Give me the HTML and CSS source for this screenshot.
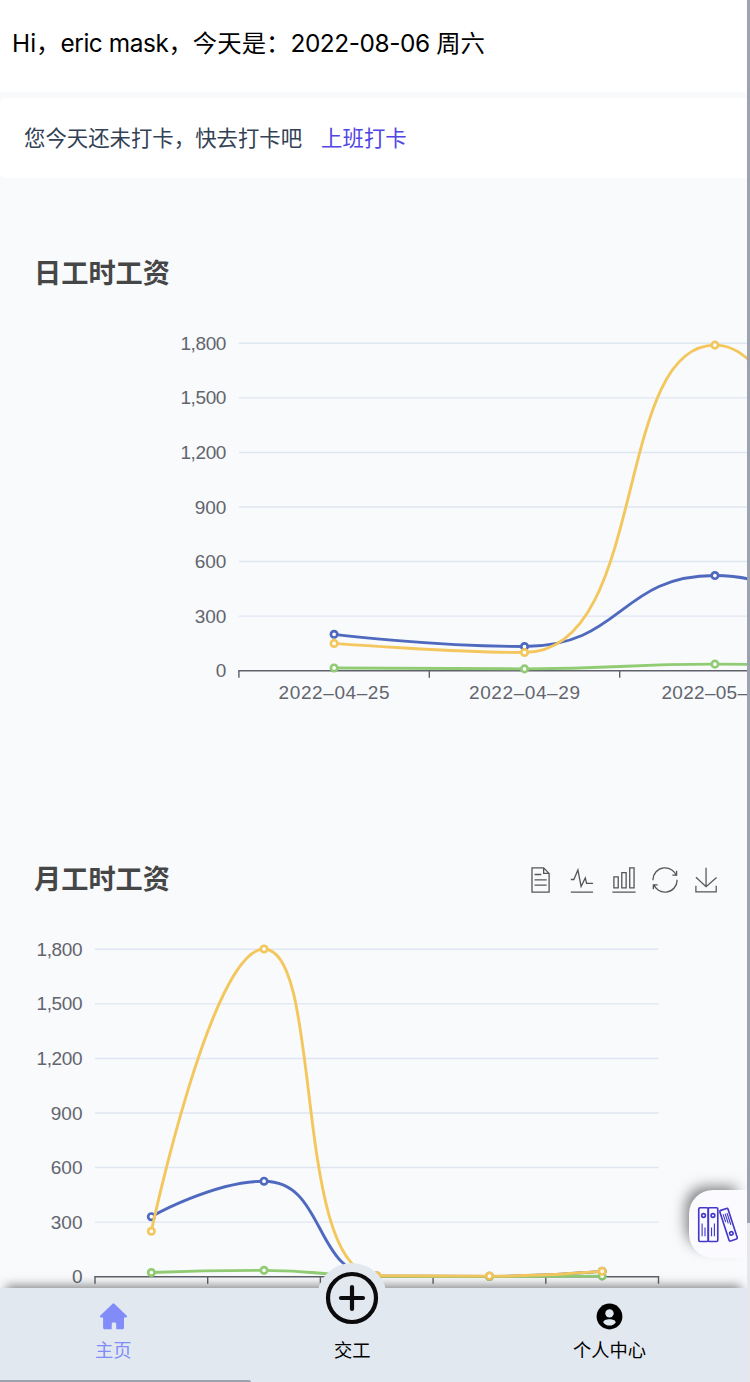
FILE: index.html
```html
<!DOCTYPE html>
<html lang="zh">
  <head>
    <meta charset="utf-8">
    <title>主页</title>
    <link rel="stylesheet" href="styles.css">
  </head>
  <body>
    <div class="page">
      <header class="greeting">Hi，<span class="latin">eric mask</span>，今天是：<span class="latin">2022-08-06 </span>周六</header>

      <div class="clock-card">
        <span>您今天还未打卡，快去打卡吧</span>
        <a class="clock-link">上班打卡</a>
      </div>

      <section class="chart">
        <div class="chart-head">
          <h2>日工时工资</h2>
        </div>
        <svg id="dayChart" class="plot"></svg>
      </section>

      <section class="chart">
        <div class="chart-head">
          <h2>月工时工资</h2>
          <div class="toolbox">
            <svg viewBox="0 0 60 60"><path d="M17.5,17.3H33M45.4,29.5h-28M11.5,2v56H51V14.8L38.4,2H11.5zM38.4,2.2v12.7H51M45.4,41.7h-28"/></svg>
            <svg viewBox="0 0 60 60"><path d="M4.1,28.9h7.1l9.3-22l7.4,38l9.7-19.7l3,12.8h14.9M4.1,58h51.4"/></svg>
            <svg viewBox="0 0 60 60"><path d="M6.7,22.9h10V48h-10V22.9zM24.9,13h10v35h-10V13zM43.2,2h10v46h-10V2zM3.1,58h53.7"/></svg>
            <svg viewBox="0 0 60 60"><path d="M47,18.9h9.8V8.7M56.3,20.1C52.1,9,40.5,0.6,26.8,2.1C12.6,3.7,1.6,16.2,2.1,30.6M13,41.1H3.1v10.2M3.7,39.9c4.2,11.1,15.8,19.5,29.5,18c14.2-1.6,25.2-14.1,24.7-28.5"/></svg>
            <svg viewBox="0 -2 63 63"><path d="M4.7,22.9L29.3,45.5L54.7,23.4M4.6,43.6L4.6,58L53.8,58L53.8,43.6M29.2,45.1L29.2,0"/></svg>
          </div>
        </div>
        <svg id="monthChart" class="plot"></svg>
      </section>
    </div>

    <div class="fab">
      <svg width="43" height="38.9" viewBox="0 0 42 38">
        <rect x="1.7" y="1.7" width="9.3" height="33" rx="1.2"/>
        <rect x="11" y="1.7" width="9.3" height="33" rx="1.2"/>
        <circle cx="6.4" cy="9.3" r="1.8"/>
        <circle cx="15.6" cy="9.3" r="1.8"/>
        <path class="thin" d="M5 17v12.5M7.8 21v8.5M14.2 21v8.5M17 17v12.5"/>
        <g transform="rotate(-18 30.8 18.2)">
          <rect x="26.6" y="2.6" width="8.4" height="31.4" rx="1.2"/>
          <circle cx="30.8" cy="27.2" r="1.7"/>
          <path class="thin" d="M28.900 7v8M30.900 7v10M32.900 7v12"/>
        </g>
      </svg>
    </div>

    <nav class="tabbar">
      <a class="tab active">
        <svg class="tab-icon" viewBox="0 0 27 27"><path d="M12.600.800a1.300 1.300 0 0 1 1.800 0L26.600 12.600c.7.8.3 1.900-.7 1.900H24v10.200c0 .9-.6 1.500-1.500 1.500h-6.300V21c0-1-.6-1.600-1.500-1.600h-1.500c-.9 0-1.500.6-1.500 1.600v5.200H4.600c-.9 0-1.500-.6-1.500-1.500V14.500H1.100c-1 0-1.400-1.100-.7-1.900z"/></svg>
        <span>主页</span>
      </a>
      <a class="tab">
        <span class="add">
          <svg width="54" height="54" viewBox="0 0 54 54">
            <circle cx="27" cy="27" r="24"/>
            <path d="M27 16v22M16 27h22"/>
          </svg>
        </span>
        <span class="tab-icon"></span>
        <span>交工</span>
      </a>
      <a class="tab">
        <svg class="tab-icon" viewBox="0 0 27 27">
          <circle cx="13.5" cy="13.5" r="12.900"/>
          <circle class="hole" cx="13.5" cy="10.400" r="4.200"/>
          <path class="hole" d="M7.300 19.400c0-2.200 2.800-3.200 6.200-3.200s6.200 1 6.200 3.200c-1.300 1.900-3.500 3.200-6.200 3.200s-4.900-1.300-6.200-3.200z"/>
        </svg>
        <span>个人中心</span>
      </a>
    </nav>

    <div class="scroll-y"></div>
    <div class="scroll-x"></div>

    <script src="charts.js"></script>
  </body>
</html>
```
FILE: styles.css
```css
* {
  margin: 0;
  padding: 0;
  box-sizing: border-box;
}

body {
  height: 1382px;
  overflow: hidden;
  background-color: #f8fafc;
  font-family: Inter, "Noto Sans CJK SC", sans-serif;
}

.page {
  display: flex;
  flex-direction: column;
  width: 750px;
}

.greeting {
  height: 92px;
  margin-bottom: 6px;
  padding-left: 12px;
  background-color: #fff;
  color: #000;
  font-size: 24.4px;
  line-height: 87px;
  white-space: nowrap;
}

.greeting .latin {
  letter-spacing: -0.42px;
}

.clock-card {
  display: flex;
  align-items: center;
  gap: 19px;
  height: 80px;
  padding: 0 0 4px 24px;
  border-radius: 5px;
  background-color: #fff;
  color: #334155;
  font-size: 21.4px;
}

.clock-link {
  color: #4f46e5;
}

/* Charts */
.chart {
  height: 606px;
}

.chart-head {
  display: flex;
  align-items: center;
  justify-content: space-between;
  height: 120px;
  padding: 72px 30px 0 34px;
}

.chart-head h2 {
  color: #464646;
  font-size: 27.2px;
  font-weight: 700;
  line-height: 48px;
}

.toolbox {
  display: flex;
  gap: 15.7px;
}

.toolbox svg {
  width: 26px;
  height: 26px;
  fill: none;
  stroke: #555;
  stroke-width: 3;
}

.plot {
  display: block;
  width: 750px;
  height: 486px;
  overflow: hidden;
}

.plot text {
  fill: #63656e;
  font-family: "Liberation Sans", sans-serif;
  font-size: 19px;
}

.plot .grid {
  stroke: #e0e6f1;
  stroke-width: 1.4;
}

.plot .axis {
  fill: none;
  stroke: #5f616a;
  stroke-width: 1.4;
}

.plot .line {
  fill: none;
  stroke-width: 2.9;
}

.plot .dot {
  fill: #fff;
  stroke-width: 2.7;
}

/* Floating button */
.fab {
  position: absolute;
  top: 1190px;
  right: 3px;
  display: flex;
  align-items: center;
  width: 58px;
  height: 68px;
  padding: 2px 0 0 8px;
  border-radius: 24px 0 0 24px;
  background-color: #fafaff;
  box-shadow: -7px -7px 14px -4px rgba(0, 0, 0, 0.5);
}

.fab svg {
  flex-shrink: 0;
  fill: none;
  stroke: #4338ca;
  stroke-width: 1.6;
}

.fab .thin {
  stroke-width: 1.1;
}

/* Bottom tabs */
.tabbar {
  position: absolute;
  left: 0;
  bottom: 0;
  display: flex;
  gap: 202.4px;
  width: 747px;
  height: 94px;
  padding: 15px 0 0 95px;
  background-color: #e2e8f0;
  box-shadow: 0 -8px 10px -6px rgba(0, 0, 0, 0.5);
}

.tab {
  position: relative;
  display: flex;
  flex-direction: column;
  align-items: center;
  color: #000;
  font-size: 18.3px;
  line-height: 26px;
}

.tab.active {
  color: #818cf8;
}

.tab-icon {
  width: 27px;
  height: 27px;
  margin-bottom: 7px;
  fill: currentColor;
}

.tab-icon .hole {
  fill: #e2e8f0;
}

.add {
  position: absolute;
  top: -40px;
  left: -17px;
  display: flex;
  align-items: center;
  justify-content: center;
  width: 70px;
  height: 70px;
  border-radius: 50%;
  background-color: #e2e8f0;
}

.add svg {
  fill: none;
  stroke: #0b0b0d;
  stroke-width: 4.2;
  stroke-linecap: round;
}

/* Scrollbars */
.scroll-y {
  position: absolute;
  top: 0;
  right: 0;
  width: 3px;
  height: 1382px;
  background: linear-gradient(#9ca3af, #9ca3af) 0 0 / 3px 1223px no-repeat #e5e7eb;
}

.scroll-x {
  position: absolute;
  left: 0;
  bottom: 0;
  width: 251px;
  height: 2px;
  border-radius: 0 2px 0 0;
  background-color: #9ca3af;
}
```
FILE: charts.js
```js
const TOP = 45.3;
const BASE = 372.7;
const MAX = 1800;
const COLORS = ["#4f69bf", "#91cc75", "#f4c75e"];

const yOf = (v) => BASE - (v / MAX) * (BASE - TOP);
const clamp = (v, a, b) => Math.max(Math.min(a, b), Math.min(Math.max(a, b), v));

// smooth line through all points, flat at the peaks
function smoothPath(pts) {
  let d = `M${pts[0]}`;
  let out = pts[0];
  for (let i = 1; i < pts.length; i++) {
    const prev = pts[i - 1];
    const cur = pts[i];
    const next = pts[i + 1];
    let cpIn = cur;
    let cpOut = cur;
    if (next) {
      const lp = Math.hypot(cur[0] - prev[0], cur[1] - prev[1]);
      const ln = Math.hypot(next[0] - cur[0], next[1] - cur[1]);
      const ratio = ln / (ln + lp);
      cpOut = [0, 1].map((k) =>
        clamp(cur[k] + (next[k] - prev[k]) * 0.5 * ratio, next[k], cur[k])
      );
      cpIn = [0, 1].map((k) =>
        clamp(cur[k] - ((cpOut[k] - cur[k]) * lp) / ln, prev[k], cur[k])
      );
      cpOut = [0, 1].map((k) => cur[k] + ((cur[k] - cpIn[k]) * ln) / lp);
    }
    d += `C${out} ${cpIn} ${cur}`;
    out = cpOut;
  }
  return d;
}

function drawChart(id, { left, band, labels, series }) {
  const right = left + band * labels.length;
  let html = "";

  for (let v = 0; v <= MAX; v += 300) {
    const y = yOf(v);
    if (v > 0) {
      html += `<path class="grid" d="M${left} ${y}H${right}"/>`;
    }
    const fit = v >= 1000 ? 'textLength="46"' : "";
    html += `<text x="${left - 12.5}" y="${y + 6.5}" text-anchor="end" ${fit}>${v.toLocaleString("en-US")}</text>`;
  }

  html += `<path class="axis" d="M${left - 0.7} ${BASE}H${right + 0.7}"/>`;
  for (let i = 0; i <= labels.length; i++) {
    html += `<path class="axis" d="M${left + i * band} ${BASE}v7"/>`;
  }
  labels.forEach((label, i) => {
    if (label) {
      const width = label.endsWith("11") ? 107 : 111;
      html += `<text x="${left + band * (i + 0.5)}" y="400.5" text-anchor="middle" textLength="${width}">${label}</text>`;
    }
  });

  const points = series.map((s) => s.map((v, i) => [left + band * (i + 0.5), yOf(v)]));
  points.forEach((pts, n) => {
    html += `<path class="line" stroke="${COLORS[n]}" d="${smoothPath(pts)}"/>`;
    pts.forEach(([x, y]) => {
      html += `<circle class="dot" stroke="${COLORS[n]}" cx="${x}" cy="${y}" r="3.2"/>`;
    });
  });

  document.getElementById(id).innerHTML = html;
}

drawChart("dayChart", {
  left: 238.9,
  band: 190.4,
  labels: ["2022–04–25", "2022–04–29", "2022–05–11", "", ""],
  series: [
    [200, 133, 523, 150, 400],
    [15, 10, 36, 20, 30],
    [150, 100, 1790, 450, 1200],
  ],
});

drawChart("monthChart", {
  left: 95,
  band: 112.7,
  labels: ["", "", "", "", ""],
  series: [
    [330, 525, 3, 2, 30],
    [23, 35, 2, 1, 3],
    [250, 1802, 5, 3, 30],
  ],
});
```
